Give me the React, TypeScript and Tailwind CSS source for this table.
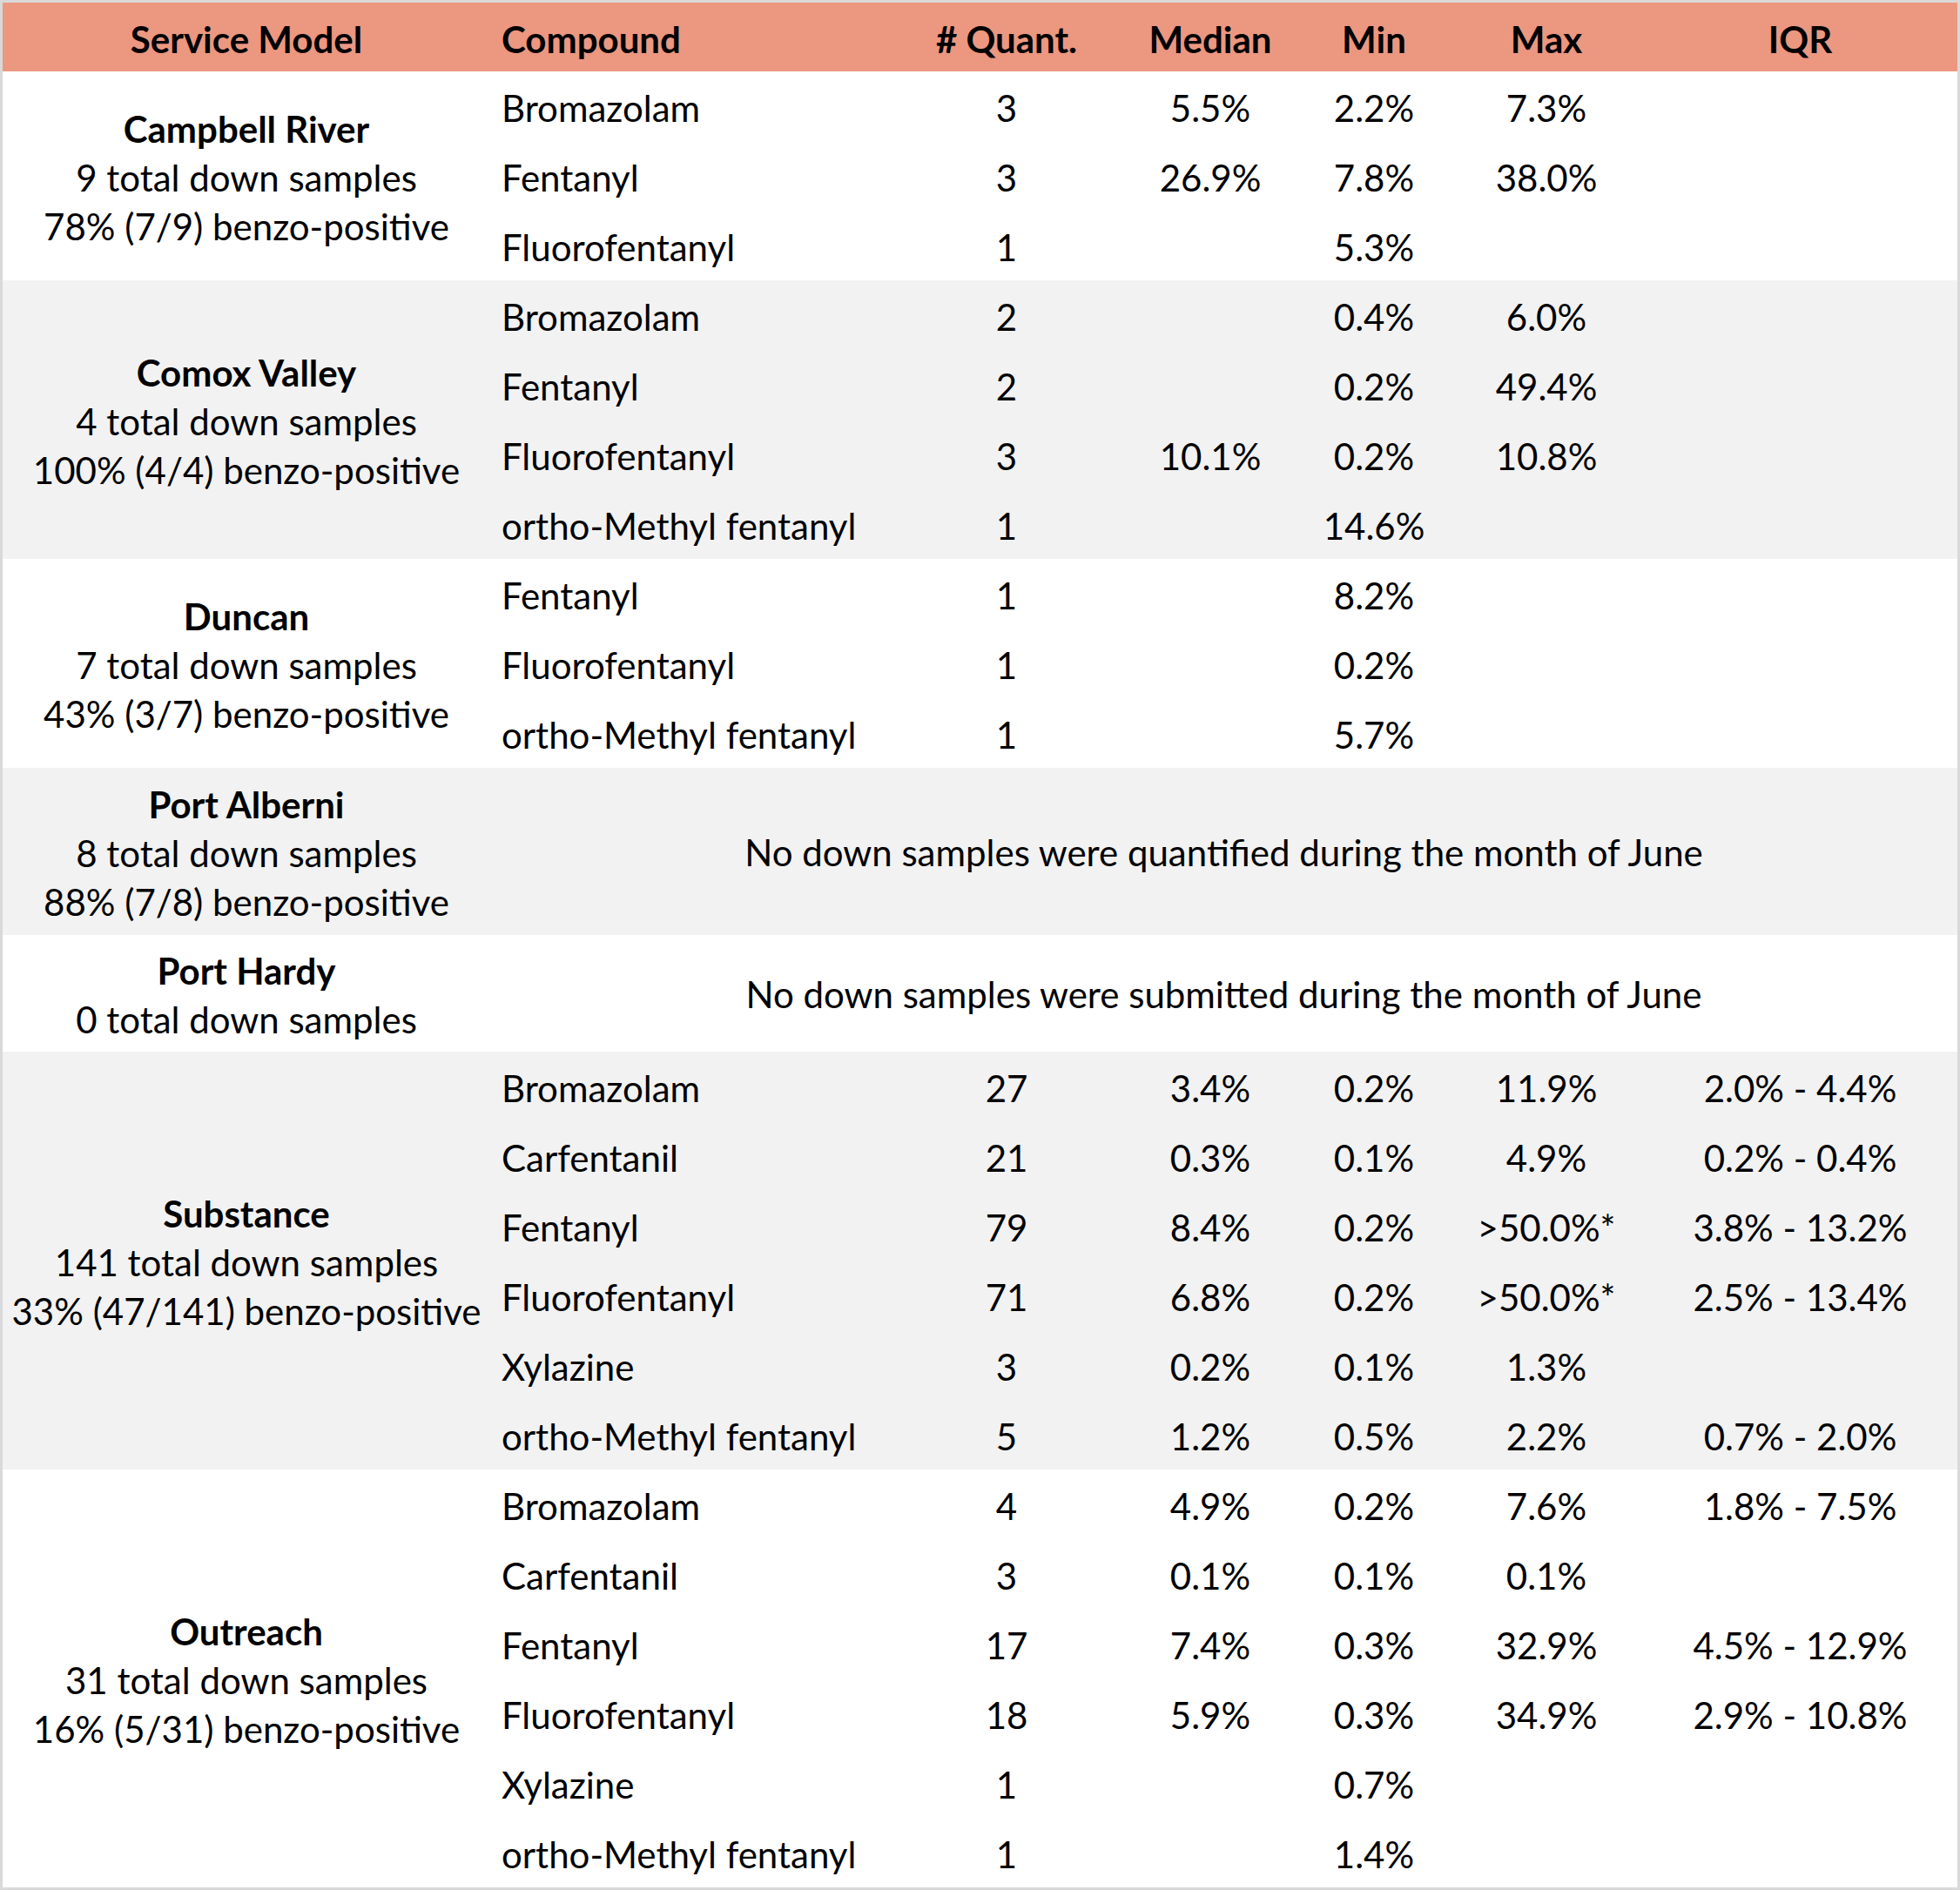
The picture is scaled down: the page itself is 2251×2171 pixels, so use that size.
type Row = [string, string, string, string, string, string]

type Block = {
  name: string
  lines: string[]
  shade: boolean
  rows?: Row[]
  note?: string
  height?: string
}

const blocks: Block[] = [
  {
    name: "Campbell River",
    lines: ["9 total down samples", "78% (7/9) benzo-positive"],
    shade: false,
    rows: [
      ["Bromazolam", "3", "5.5%", "2.2%", "7.3%", ""],
      ["Fentanyl", "3", "26.9%", "7.8%", "38.0%", ""],
      ["Fluorofentanyl", "1", "", "5.3%", "", ""],
    ],
  },
  {
    name: "Comox Valley",
    lines: ["4 total down samples", "100% (4/4) benzo-positive"],
    shade: true,
    rows: [
      ["Bromazolam", "2", "", "0.4%", "6.0%", ""],
      ["Fentanyl", "2", "", "0.2%", "49.4%", ""],
      ["Fluorofentanyl", "3", "10.1%", "0.2%", "10.8%", ""],
      ["ortho-Methyl fentanyl", "1", "", "14.6%", "", ""],
    ],
  },
  {
    name: "Duncan",
    lines: ["7 total down samples", "43% (3/7) benzo-positive"],
    shade: false,
    rows: [
      ["Fentanyl", "1", "", "8.2%", "", ""],
      ["Fluorofentanyl", "1", "", "0.2%", "", ""],
      ["ortho-Methyl fentanyl", "1", "", "5.7%", "", ""],
    ],
  },
  {
    name: "Port Alberni",
    lines: ["8 total down samples", "88% (7/8) benzo-positive"],
    shade: true,
    note: "No down samples were quantified during the month of June",
    height: "h-[192px]",
  },
  {
    name: "Port Hardy",
    lines: ["0 total down samples"],
    shade: false,
    note: "No down samples were submitted during the month of June",
    height: "h-[134px]",
  },
  {
    name: "Substance",
    lines: ["141 total down samples", "33% (47/141) benzo-positive"],
    shade: true,
    rows: [
      ["Bromazolam", "27", "3.4%", "0.2%", "11.9%", "2.0% - 4.4%"],
      ["Carfentanil", "21", "0.3%", "0.1%", "4.9%", "0.2% - 0.4%"],
      ["Fentanyl", "79", "8.4%", "0.2%", ">50.0%*", "3.8% - 13.2%"],
      ["Fluorofentanyl", "71", "6.8%", "0.2%", ">50.0%*", "2.5% - 13.4%"],
      ["Xylazine", "3", "0.2%", "0.1%", "1.3%", ""],
      ["ortho-Methyl fentanyl", "5", "1.2%", "0.5%", "2.2%", "0.7% - 2.0%"],
    ],
  },
  {
    name: "Outreach",
    lines: ["31 total down samples", "16% (5/31) benzo-positive"],
    shade: false,
    rows: [
      ["Bromazolam", "4", "4.9%", "0.2%", "7.6%", "1.8% - 7.5%"],
      ["Carfentanil", "3", "0.1%", "0.1%", "0.1%", ""],
      ["Fentanyl", "17", "7.4%", "0.3%", "32.9%", "4.5% - 12.9%"],
      ["Fluorofentanyl", "18", "5.9%", "0.3%", "34.9%", "2.9% - 10.8%"],
      ["Xylazine", "1", "", "0.7%", "", ""],
      ["ortho-Methyl fentanyl", "1", "", "1.4%", "", ""],
    ],
  },
]

const cols = "grid grid-cols-[460px_266px_202px_174px_222px_361px] items-center"

export default function App() {
  return (
    <div className="w-[2251px] h-[2171px] bg-[#d9d9d9] p-[3px] font-['Lato','Liberation_Sans',sans-serif] text-black text-[42px]">
      <div className="w-full h-full bg-white flex flex-col">
        {/* header */}
        <div className="flex h-[79px] pt-[5px] bg-[#ec9780] font-bold items-center">
          <div className="w-[560px] text-center">Service Model</div>
          <div className={cols + " flex-1"}>
            <div className="pl-[13px]">Compound</div>
            <div className="text-center"># Quant.</div>
            <div className="text-center">Median</div>
            <div className="text-center">Min</div>
            <div className="text-center">Max</div>
            <div className="text-center">IQR</div>
          </div>
        </div>

        {blocks.map((b) => (
          <div key={b.name} className={"flex " + (b.shade ? "bg-[#f2f2f2]" : "bg-white")}>
            <div className="w-[560px] pt-[3px] flex flex-col justify-center items-center text-center leading-[56px]">
              <div className="font-bold">{b.name}</div>
              {b.lines.map((l) => (
                <div key={l}>{l}</div>
              ))}
            </div>
            {b.rows ? (
              <div className="flex-1 flex flex-col">
                {b.rows.map((r, i) => (
                  <div key={i} className={cols + " h-[80px] pt-[5px]"}>
                    <div className="pl-[13px]">{r[0]}</div>
                    {r.slice(1).map((c, j) => (
                      <div key={j} className="text-center">{c}</div>
                    ))}
                  </div>
                ))}
              </div>
            ) : (
              <div className={"flex-1 flex items-center justify-center pt-[3px] " + b.height}>{b.note}</div>
            )}
          </div>
        ))}
      </div>
    </div>
  )
}
